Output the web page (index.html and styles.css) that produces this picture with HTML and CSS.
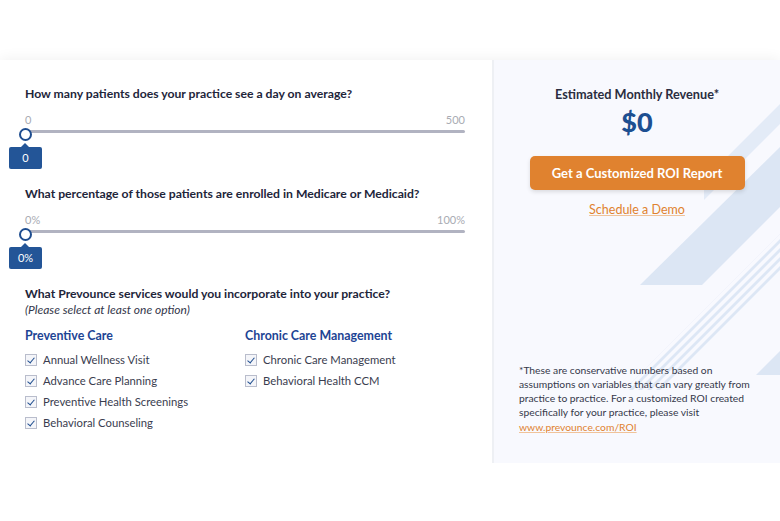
FILE: index.html
```html
<!DOCTYPE html>
<html lang="en">
<head>
  <meta charset="UTF-8" />
  <title>ROI Calculator</title>
  <link rel="stylesheet" href="styles.css">
</head>
<body>
  <div class="calc">
    <!-- questions -->
    <div class="form">
      <div class="question">
        <p class="q-title">How many patients does your practice see a day on average?</p>
        <div class="range-labels"><span>0</span><span>500</span></div>
        <div class="slider">
          <div class="track"></div>
          <div class="thumb"></div>
          <div class="bubble">0</div>
        </div>
      </div>

      <div class="question">
        <p class="q-title">What percentage of those patients are enrolled in Medicare or Medicaid?</p>
        <div class="range-labels"><span>0%</span><span>100%</span></div>
        <div class="slider">
          <div class="track"></div>
          <div class="thumb"></div>
          <div class="bubble">0%</div>
        </div>
      </div>

      <div class="services">
        <p class="q-title">What Prevounce services would you incorporate into your practice?</p>
        <p class="hint">(Please select at least one option)</p>
        <div class="groups">
          <div class="group">
            <h3>Preventive Care</h3>
            <label class="check"><span class="box"></span>Annual Wellness Visit</label>
            <label class="check"><span class="box"></span>Advance Care Planning</label>
            <label class="check"><span class="box"></span>Preventive Health Screenings</label>
            <label class="check"><span class="box"></span>Behavioral Counseling</label>
          </div>
          <div class="group">
            <h3>Chronic Care Management</h3>
            <label class="check"><span class="box"></span>Chronic Care Management</label>
            <label class="check"><span class="box"></span>Behavioral Health CCM</label>
          </div>
        </div>
      </div>
    </div>

    <!-- result -->
    <div class="result">
      <svg class="deco" width="290" height="403" viewBox="0 0 290 403">
        <defs>
          <clipPath id="lines">
            <polygon points="130,330 290,170 290,300 240,403 150,403" />
          </clipPath>
        </defs>
        <polygon points="146,225 208,225 290,143 290,83 " fill="#dce6f4" />
        <polygon points="210,140 290,60 290,40 210,120" fill="#e3ebf7" />
        <g clip-path="url(#lines)" fill="#dde7f5">
          <polygon points="90,330 300,120 304,120 94,330" />
          <polygon points="99,330 309,120 313,120 103,330" />
          <polygon points="108,330 318,120 322,120 112,330" />
          <polygon points="117,330 327,120 331,120 121,330" />
          <polygon points="126,330 336,120 340,120 130,330" />
          <polygon points="135,330 345,120 349,120 139,330" />
          <polygon points="144,330 354,120 358,120 148,330" />
          <polygon points="153,330 363,120 367,120 157,330" />
          <polygon points="162,330 372,120 376,120 166,330" />
        </g>
        <polygon points="262,315 290,287 290,315" fill="#dce6f4" />
      </svg>

      <div class="summary">
        <p class="est">Estimated Monthly Revenue*</p>
        <p class="amount">$0</p>
        <button class="cta">Get a Customized ROI Report</button>
        <a class="demo" href="#">Schedule a Demo</a>
      </div>

      <p class="note">*These are conservative numbers based on assumptions on variables that can vary greatly from practice to practice. For a customized ROI created specifically for your practice, please visit <a href="#">www.prevounce.com/ROI</a></p>
    </div>
  </div>
</body>
</html>
```

FILE: styles.css
```css
body {
  margin: 0;
  padding-top: 60px;
  font-family: Lato, "Open Sans", sans-serif;
  background: #fff;
  color: #22253a;
}

p {
  margin: 0;
}

.calc {
  display: flex;
  height: 403px;
  box-shadow: 0 0 14px rgba(0, 0, 0, 0.07);
  background: #fff;
}

/* left side */
.form {
  width: 440px;
  padding: 26px 27px 0 25px;
  border-right: 2px solid #eef0f4;
}

.q-title {
  font-size: 12.2px;
  font-weight: 700;
  color: #22253a;
  line-height: 16px;
}

.question {
  height: 100px;
}

.range-labels {
  display: flex;
  justify-content: space-between;
  margin-top: 11px;
  font-size: 11px;
  color: #a9abb3;
  line-height: 14px;
}

.slider {
  position: relative;
  height: 46px;
}

.track {
  margin-top: 3px;
  height: 3px;
  background: #b1b3c1;
  border-radius: 2px;
}

.thumb {
  position: absolute;
  left: -6px;
  top: -2px;
  width: 9px;
  height: 9px;
  border: 2px solid #1e4d8f;
  border-radius: 50%;
  background: #fff;
}

.bubble {
  position: absolute;
  left: -16px;
  top: 17px;
  width: 33px;
  height: 22px;
  line-height: 22px;
  background: #235597;
  border-radius: 2px;
  color: #fff;
  font-size: 11px;
  text-align: center;
}

.bubble::before {
  content: "";
  position: absolute;
  left: 12px;
  top: -4px;
  border-left: 4px solid transparent;
  border-right: 4px solid transparent;
  border-bottom: 4px solid #235597;
}

.hint {
  font-size: 12px;
  font-style: italic;
  color: #33364a;
  line-height: 15px;
}

.groups {
  display: flex;
  margin-top: 11px;
}

.group {
  width: 220px;
}

.group h3 {
  margin: 0 0 5px;
  font-size: 12.4px;
  font-weight: 700;
  color: #1d4494;
  line-height: 16px;
}

.check {
  display: flex;
  align-items: center;
  height: 21px;
  font-size: 11.3px;
  color: #3a3d4f;
}

.box {
  position: relative;
  width: 10px;
  height: 10px;
  margin-right: 6px;
  border: 1px solid #b9bdcc;
  background: #f4f5f9;
}

.box::after {
  content: "";
  position: absolute;
  left: 3px;
  top: 1px;
  width: 3px;
  height: 6px;
  border-right: 1.5px solid #1e4d8f;
  border-bottom: 1.5px solid #1e4d8f;
  transform: rotate(40deg);
}

/* right side */
.result {
  position: relative;
  flex: 1;
  display: flex;
  flex-direction: column;
  justify-content: space-between;
  background: #f8f9fe;
  overflow: hidden;
}

.deco {
  position: absolute;
  left: 0;
  top: 0;
}

.summary {
  position: relative;
  display: flex;
  flex-direction: column;
  align-items: center;
  padding-top: 26px;
}

.est {
  font-size: 12.7px;
  font-weight: 700;
  color: #2a2d40;
  line-height: 16px;
}

.amount {
  margin-top: 5px;
  font-size: 27px;
  font-weight: 900;
  color: #1d4f91;
  line-height: 30px;
}

.cta {
  margin-top: 19px;
  width: 215px;
  height: 34px;
  background: #e0822f;
  color: #fff;
  border: none;
  border-radius: 5px;
  font-family: inherit;
  font-size: 13px;
  font-weight: 700;
  box-shadow: 0 2px 4px rgba(0, 0, 0, 0.12);
}

.demo {
  margin-top: 12px;
  font-size: 12.5px;
  color: #e0822f;
  text-decoration-color: #f0c39a;
}

.note {
  position: relative;
  padding: 0 26px 29px 25px;
  font-size: 10.3px;
  line-height: 14.3px;
  color: #35384a;
}

.note a {
  color: #e0822f;
  text-decoration-color: #f0c39a;
}
```
